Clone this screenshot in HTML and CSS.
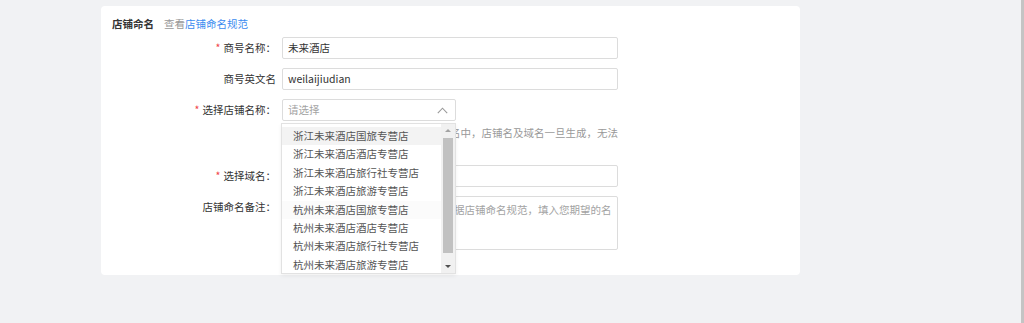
FILE: index.html
```html
<!DOCTYPE html>
<html lang="zh-CN">
<head>
<meta charset="utf-8">
<title>店铺命名</title>
<link rel="stylesheet" href="styles.css">
</head>
<body>
<div class="page">
  <div class="card">
    <div class="title"><span class="title-main">店铺命名</span><span class="title-link">查看<a class="link">店铺命名规范</a></span></div>
    <div class="form">
      <div class="row">
        <div class="label"><span class="req">*</span>商号名称：</div>
        <div class="control"><div class="input">未来酒店</div></div>
      </div>
      <div class="row">
        <div class="label">商号英文名</div>
        <div class="control"><div class="input">weilaijiudian</div></div>
      </div>
      <div class="row">
        <div class="label"><span class="req">*</span>选择店铺名称：</div>
        <div class="control">
          <div class="select-wrap">
            <div class="select"><span class="placeholder">请选择</span>
              <svg class="chev" width="11" height="7" viewBox="0 0 11 7"><polyline points="0.8,6.2 5.5,1.2 10.2,6.2" fill="none" stroke="#9a9a9a" stroke-width="1.1"/></svg>
            </div>
            <div class="dropdown">
              <div class="list">
                <div class="item active">浙江未来酒店国旅专营店</div>
                <div class="item">浙江未来酒店酒店专营店</div>
                <div class="item">浙江未来酒店旅行社专营店</div>
                <div class="item">浙江未来酒店旅游专营店</div>
                <div class="item faint">杭州未来酒店国旅专营店</div>
                <div class="item">杭州未来酒店酒店专营店</div>
                <div class="item">杭州未来酒店旅行社专营店</div>
                <div class="item">杭州未来酒店旅游专营店</div>
              </div>
              <div class="sbar">
                <div class="sarrow"><span class="tri-up"></span></div>
                <div class="strack"><div class="sthumb"></div></div>
                <div class="sarrow"><span class="tri-down"></span></div>
              </div>
            </div>
          </div>
          <div class="hint">请注意，商号名称将会自动填入店铺名中，店铺名及域名一旦生成，无法修改，请谨慎选择。</div>
        </div>
      </div>
      <div class="row">
        <div class="label"><span class="req">*</span>选择域名：</div>
        <div class="control"><div class="input"></div></div>
      </div>
      <div class="row">
        <div class="label">店铺命名备注：</div>
        <div class="control"><div class="textarea"><span class="placeholder">请结合您的经营品牌及类目情况，根据店铺命名规范，填入您期望的名称</span></div></div>
      </div>
    </div>
  </div>
</div>
</body>
</html>
```
FILE: styles.css
```css
html, body {
  margin: 0;
  padding: 0;
  background: #f1f2f4;
  height: 100%;
}
body {
  font-family: "Noto Sans CJK SC", "Noto Sans", sans-serif;
  font-size: 10.5px;
  color: #333;
  border-right: 3px solid #c4c4c4;
  box-sizing: border-box;
  overflow: hidden;
}
.page {
  padding: 6px 0 0 101px;
}
.card {
  width: 699px;
  height: 269px;
  background: #fff;
  border-radius: 4px;
  box-sizing: border-box;
  padding-top: 9px;
}
.title {
  padding-left: 11px;
  line-height: 18px;
  height: 18px;
}
.title-main {
  font-weight: bold;
  color: #333;
  margin-right: 10px;
}
.title-link {
  color: #999;
}
.link {
  color: #3b8cf0;
}
.form {
  margin-top: 4px;
  display: flex;
  flex-direction: column;
  gap: 9px;
}
.row {
  display: flex;
  align-items: flex-start;
}
.label {
  width: 175px;
  flex: none;
  text-align: right;
  line-height: 22px;
  color: #333;
  margin-right: 6px;
  box-sizing: border-box;
}
.req {
  color: #f04646;
  margin-right: 3px;
}
.control {
  width: 336px;
}
.input {
  height: 22px;
  border: 1px solid #dcdcdc;
  border-radius: 2px;
  box-sizing: border-box;
  padding: 0 5px;
  line-height: 20px;
  color: #333;
}
.select-wrap {
  position: relative;
  width: 174px;
}
.select {
  height: 22px;
  border: 1px solid #dcdcdc;
  border-radius: 2px;
  box-sizing: border-box;
  padding: 0 5px;
  line-height: 20px;
  display: flex;
  justify-content: space-between;
  align-items: center;
}
.placeholder {
  color: #a3a3a3;
}
.chev {
  margin-right: 2px;
}
.hint {
  width: 337px;
  margin-top: 4px;
  line-height: 15.5px;
  color: #999;
}
.textarea {
  height: 54px;
  border: 1px solid #dcdcdc;
  border-radius: 2px;
  box-sizing: border-box;
  padding: 4px 3px;
  line-height: 17px;
}
.dropdown {
  position: absolute;
  left: -1px;
  top: 24px;
  width: 175px;
  height: 151px;
  background: #fff;
  border: 1px solid #e2e2e2;
  box-sizing: border-box;
  box-shadow: 0 2px 4px rgba(0,0,0,0.06);
  display: flex;
  overflow: hidden;
  z-index: 5;
}
.list {
  flex: 1;
  padding-top: 3px;
}
.item {
  height: 18.4px;
  line-height: 18.4px;
  padding-left: 11px;
  color: #555;
  white-space: nowrap;
}
.item.active {
  background: #f3f3f3;
}
.item.faint {
  background: #fbfbfb;
}
.sbar {
  width: 14px;
  flex: none;
  background: #f1f1f1;
  display: flex;
  flex-direction: column;
}
.sarrow {
  height: 13px;
  display: flex;
  align-items: center;
  justify-content: center;
}
.strack {
  flex: 1;
  padding: 1px 2px 4px;
  display: flex;
}
.sthumb {
  flex: 1;
  background: #c1c1c1;
  max-height: 115px;
}
.tri-up {
  width: 0;
  height: 0;
  border-left: 3px solid transparent;
  border-right: 3px solid transparent;
  border-bottom: 3px solid #a3a3a3;
}
.tri-down {
  width: 0;
  height: 0;
  border-left: 3px solid transparent;
  border-right: 3px solid transparent;
  border-top: 3px solid #505050;
}
```
